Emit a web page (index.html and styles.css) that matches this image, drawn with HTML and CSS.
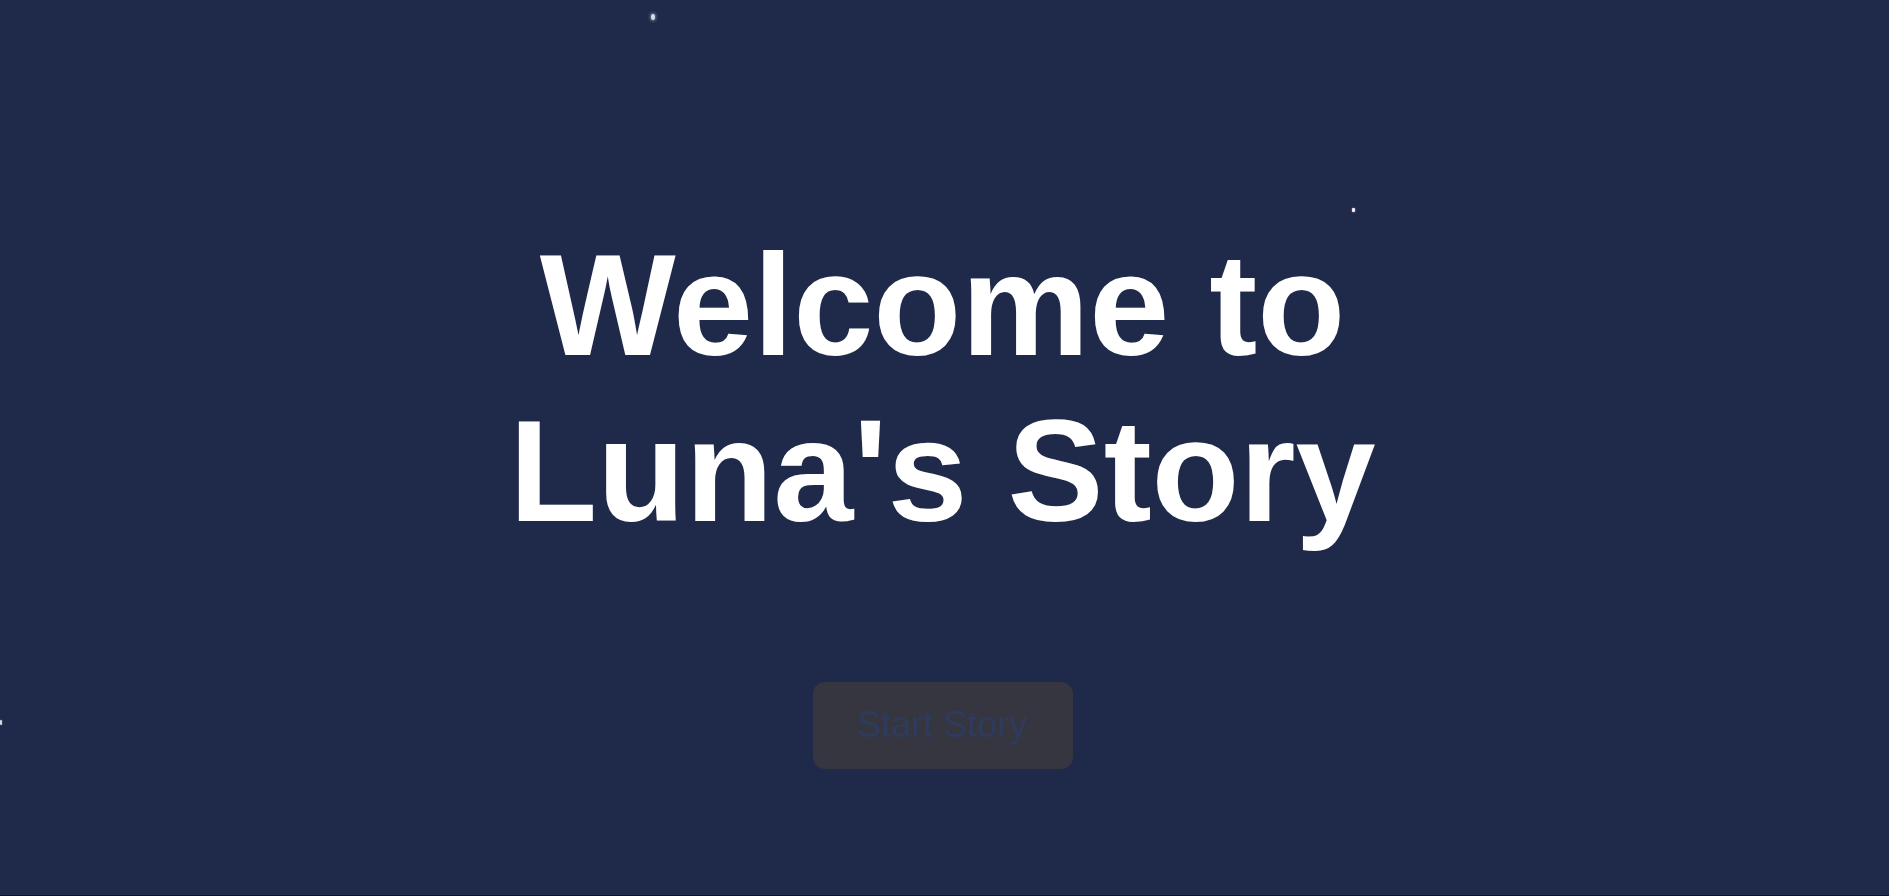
FILE: index.html
```html
<!DOCTYPE html>
<html lang="en">
<head>
<meta charset="utf-8">
<title>Luna's Story</title>
<link rel="stylesheet" href="styles.css">
</head>
<body>
<main class="scene">
  <span class="star star-a"></span>
  <span class="star star-b"></span>
  <span class="star star-c"></span>
  <h1 class="title">Welcome to<br>Luna's Story</h1>
  <button class="start-btn" type="button">Start Story</button>
</main>
</body>
</html>
```
FILE: styles.css
```css
html, body {
  margin: 0;
  padding: 0;
  height: 100%;
  background: #10131c;
  overflow: hidden;
}

.scene {
  position: relative;
  box-sizing: border-box;
  height: calc(100vh - 1px);
  padding-right: 4px;
  background: #1f2a4a;
  display: flex;
  flex-direction: column;
  align-items: center;
  justify-content: center;
  font-family: "Liberation Sans", Arial, sans-serif;
  overflow: hidden;
}

.title {
  margin: 96px 0 96px;
  font-size: 144px;
  font-weight: 700;
  line-height: 166px;
  color: #ffffff;
  text-align: center;
}

.start-btn {
  margin-top: 31px;
  width: 260px;
  height: 87px;
  padding: 0;
  border: none;
  border-radius: 12px;
  background: #35363f;
  color: #2f3b5c;
  font-family: "Liberation Sans", Arial, sans-serif;
  font-size: 36px;
  cursor: pointer;
}

.star {
  position: absolute;
  border-radius: 50%;
  background: #f2f0f8;
}

.star-a {
  left: 651px;
  top: 14px;
  width: 4px;
  height: 6px;
  background: #d8dbe6;
  box-shadow: 0 0 3px 1px rgba(220, 224, 236, 0.45);
}

.star-b {
  left: 1352px;
  top: 208px;
  width: 3px;
  height: 4px;
  border-radius: 1px;
  background: #f6eaf8;
  box-shadow: 0 0 2px rgba(240, 220, 250, 0.6);
}

.star-c {
  left: 0;
  top: 720px;
  width: 2px;
  height: 5px;
  border-radius: 1px;
  background: #d8d6e4;
  box-shadow: 0 0 2px rgba(220, 220, 235, 0.5);
}
```
